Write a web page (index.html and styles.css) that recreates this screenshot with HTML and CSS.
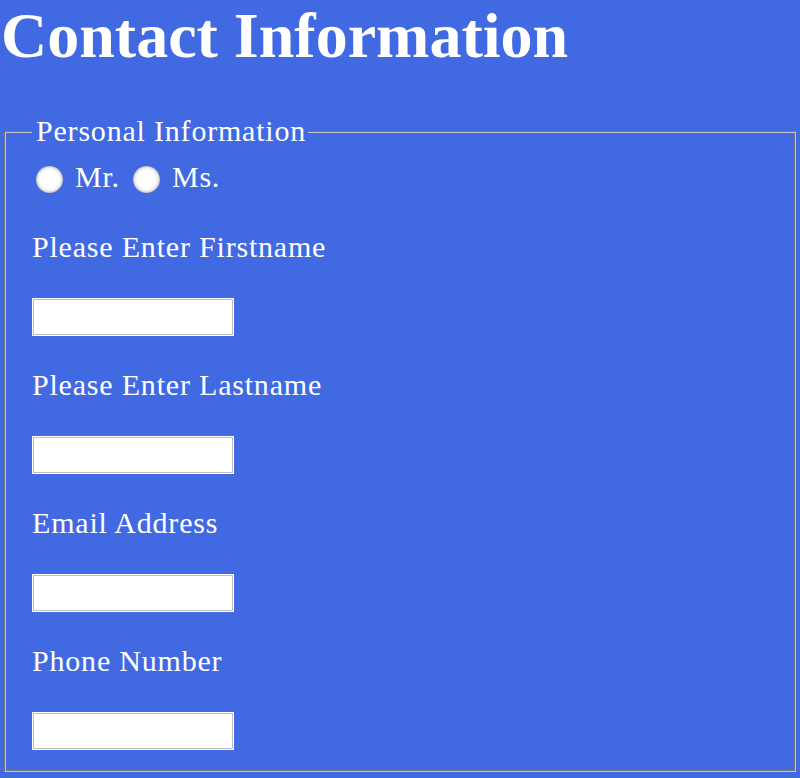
FILE: index.html
```html
<!DOCTYPE html>
<html lang="en">
<head>
<meta charset="utf-8">
<title>Contact Information</title>
<link rel="stylesheet" href="styles.css">
</head>
<body>
<h1 class="title">Contact Information</h1>
<form class="contact-form">
  <fieldset class="group">
    <legend class="group-legend">Personal Information</legend>
    <div class="salutation">
      <input class="radio" type="radio" name="title" id="mr">
      <label class="radio-label" for="mr">Mr.</label>
      <input class="radio radio-second" type="radio" name="title" id="ms">
      <label class="radio-label" for="ms">Ms.</label>
    </div>
    <label class="field-label first" for="firstname">Please Enter Firstname</label>
    <input class="text-input" type="text" id="firstname">
    <label class="field-label" for="lastname">Please Enter Lastname</label>
    <input class="text-input" type="text" id="lastname">
    <label class="field-label" for="email">Email Address</label>
    <input class="text-input" type="text" id="email">
    <label class="field-label" for="phone">Phone Number</label>
    <input class="text-input" type="text" id="phone">
  </fieldset>
</form>
</body>
</html>
```
FILE: styles.css
```css
html, body {
  margin: 0;
  padding: 0;
  background: #4169e1;
  color: #ffffff;
  font-family: "Liberation Serif", "Times New Roman", serif;
}

.title {
  margin: 0;
  padding-left: 1px;
  font-size: 64px;
  line-height: 71px;
  font-weight: bold;
}

.contact-form {
  margin: 43px 0 0 0;
}

.group {
  margin: 0 4px;
  padding: 0 23px 21px 27px;
  border-style: solid;
  border-width: 1px;
  border-color: #767676 #c4c4c4 #c4c4c4 #767676;
  box-shadow: inset 1px 1px 0 #c4c4c4, inset -1px -1px 0 #767676;
  display: flex;
  flex-direction: column;
  align-items: flex-start;
}

.group-legend {
  font-size: 30px;
  line-height: 34px;
  letter-spacing: 0.8px;
  padding: 0 2px 0 4px;
  margin-left: 0;
  background: #4169e1;
}

.salutation {
  margin-top: 12px;
  display: flex;
  align-items: center;
  font-size: 30px;
  line-height: 34px;
  letter-spacing: 0.8px;
}

.radio {
  -webkit-appearance: none;
  appearance: none;
  width: 27px;
  height: 27px;
  margin: 4px 12px 0 4px;
  border-radius: 50%;
  background: radial-gradient(circle at 50% 50%, #ffffff 0, #ffffff 9px, #eeeeee 11.5px, #bdbdbd 13.5px);
}

.radio-second {
  margin-left: 13px;
}

.radio-label {
  display: block;
}

.field-label {
  display: block;
  font-size: 30px;
  line-height: 34px;
  letter-spacing: 0.8px;
  margin-top: 32px;
}

.field-label.first {
  margin-top: 36px;
}

.text-input {
  box-sizing: border-box;
  width: 202px;
  height: 38px;
  margin: 34px 0 0 0;
  padding: 0;
  border: 1px solid #ffffff;
  box-shadow: inset 0 0 0 1px #bdbdbd;
  background: #ffffff;
  font-size: 16px;
}
```
